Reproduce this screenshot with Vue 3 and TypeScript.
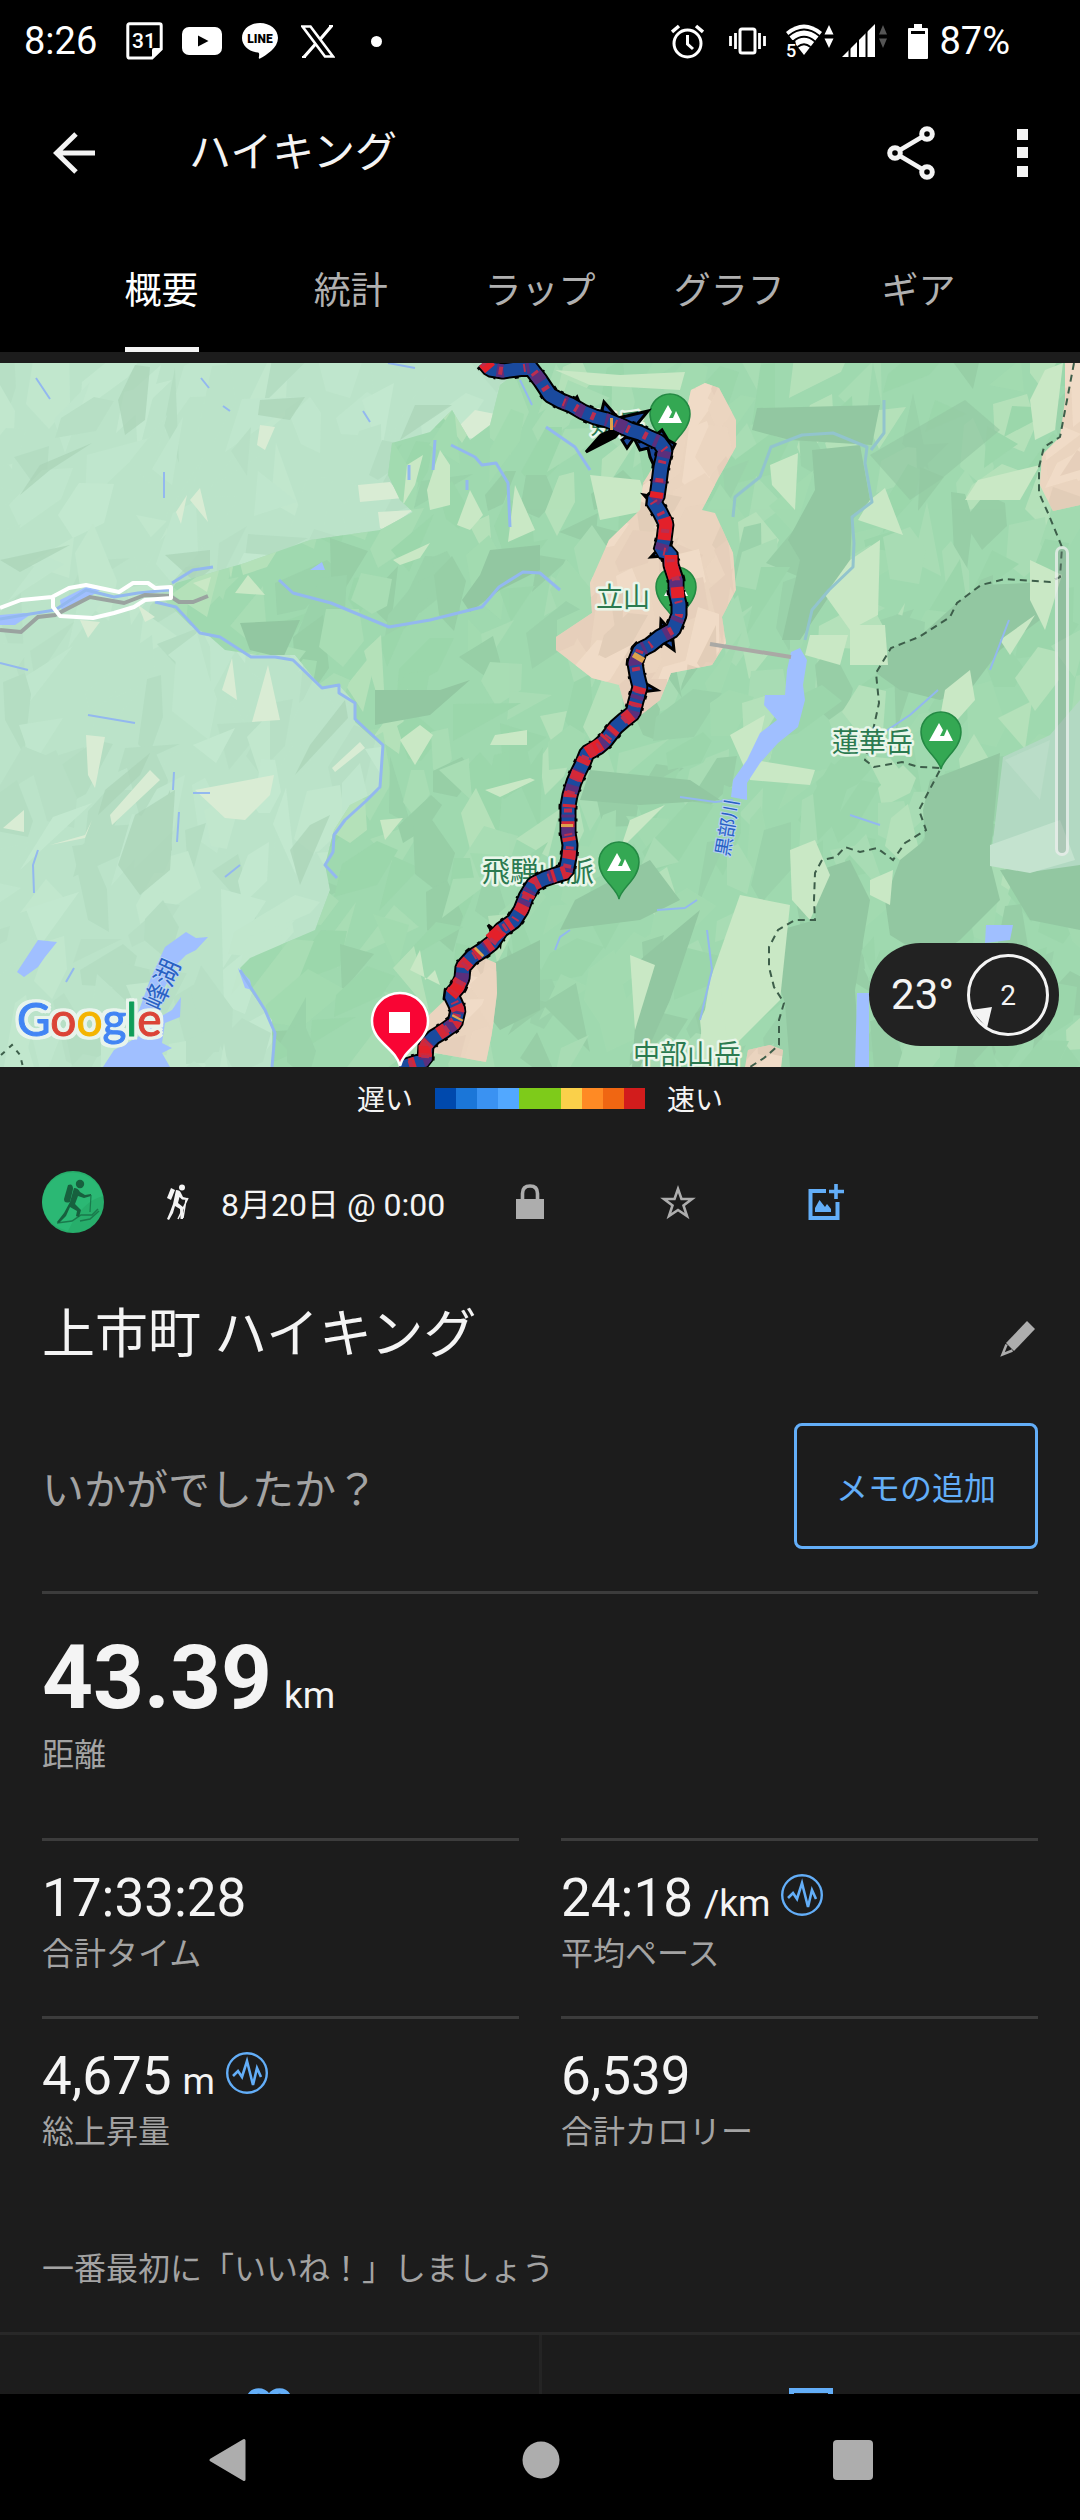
<script setup lang="ts">
import { ref } from 'vue'

const tabs = ['概要', '統計', 'ラップ', 'グラフ', 'ギア']
const activeTab = ref(0)

const paceScale = ['#0049ad', '#1b76d8', '#3a92f2', '#52a8ff', '#7ecb1a', '#7ecb1a', '#fad04a', '#ff8a24', '#f06612', '#d21c1c']

interface Stat {
  value: string
  unit?: string
  label: string
  pulse?: boolean
}

const stats: Stat[] = [
  { value: '17:33:28', label: '合計タイム' },
  { value: '24:18', unit: '/km', label: '平均ペース', pulse: true },
  { value: '4,675', unit: 'm', label: '総上昇量', pulse: true },
  { value: '6,539', label: '合計カロリー' },
]

interface Facet {
  points: string
  fill: string
}

// Shaded relief: slanted polygons scattered over the terrain, from a seeded generator.
function relief(seed: number, cell: number, palette: string[]): Facet[] {
  let state = seed
  const rnd = (): number => {
    state = (state * 1664525 + 1013904223) % 4294967296
    return state / 4294967296
  }
  const out: Facet[] = []
  for (let cy = 360; cy < 1080; cy += cell) {
    for (let cx = -10; cx < 1100; cx += cell) {
      const x = cx + rnd() * cell
      const y = cy + rnd() * cell
      const tilt = -0.5 - rnd() * 1.4
      const long = cell * (0.6 + rnd() * 0.7)
      const wide = cell * (0.3 + rnd() * 0.35)
      const corners = rnd() < 0.4 ? 3 : 5
      const pts: string[] = []
      for (let i = 0; i < corners; i++) {
        const a = ((i + rnd() * 0.6) / corners) * Math.PI * 2
        const u = Math.cos(a) * long
        const v = Math.sin(a) * wide
        pts.push(`${Math.round(x + u * Math.cos(tilt) - v * Math.sin(tilt))},${Math.round(y + u * Math.sin(tilt) + v * Math.cos(tilt))}`)
      }
      out.push({ points: pts.join(' '), fill: palette[Math.floor(rnd() * palette.length)] })
    }
  }
  return out
}

const lowland = relief(7, 42, ['#c8ecd4', '#b0dabf', '#c3e9d0', '#b5dec3', '#c5ead1', '#bce4ca'])
const park = relief(42, 38, ['#93c8a2', '#aedfb8', '#98cfa8', '#aedfb8', '#c2e6c1', '#9ad5aa', '#a5dcb2', '#9ad5aa'])
const alpine = relief(99, 34, ['#e4ceb9', '#f3dfca', '#dfcab5', '#ecd6c1'])

const track =
  'M484 362 490 369 503 371 517 369 530 367 540 380 550 395 561 401 571 405 583 412 595 417 607 420 619 425 630 430 640 433 650 438 659 442 665 450 661 467 659 483 657 497 653 501 660 512 666 524 664 540 661 551 670 553 671 565 676 580 676 592 679 604 679 615 673 630 660 637 650 645 640 650 635 663 637 675 640 687 636 701 633 713 624 720 616 727 606 740 598 747 587 753 583 763 578 773 574 782 570 795 568 806 568 820 568 833 570 845 569 857 566 872 556 875 544 879 534 884 526 897 521 910 514 921 501 930 492 943 483 950 472 957 463 967 462 978 458 987 451 995 455 1003 458 1010 455 1023 444 1031 434 1037 426 1045 425 1060 400 1068'

const boundary =
  'M1074 363 1067 400 1060 437 1044 447 1039 467 1039 493 1048 513 1062 547 1060 577 1050 582 1005 579 981 585 957 603 950 617 919 637 891 648 876 673 879 703 872 735 865 760 874 767 902 762 919 767 941 768 919 810 926 830 905 843 893 860 877 848 860 852 845 847 836 857 822 860 815 873 814 900 815 920 795 920 778 930 769 947 769 967 774 987 784 1003 779 1020 779 1045 764 1058 750 1067'

const peaks = [
  { x: 670, y: 414 },
  { x: 676, y: 587 },
  { x: 941, y: 732 },
  { x: 619, y: 862 },
]
</script>

<template>
  <div class="screen">
    <header class="top">
      <div class="status">
        <span class="clock">8:26</span>
        <svg class="ic-cal" width="37" height="38" viewBox="0 0 37 38">
          <path d="M3.500 1.800H33.500Q35.200 1.800 35.200 3.500V27L26 36H3.500Q1.800 36 1.800 34.300V3.500Q1.800 1.800 3.500 1.800Z" fill="none" stroke="#fff" stroke-width="3" />
          <path d="M35 26 26 36V28Q26 26 28 26Z" fill="#fff" />
          <text x="18" y="26" text-anchor="middle" font-size="21" font-weight="500" fill="#fff">31</text>
        </svg>
        <svg class="ic-yt" width="40" height="28" viewBox="0 0 40 28">
          <rect width="40" height="28" rx="7" fill="#fff" /><path d="M16 8.500 26.500 14 16 19.500Z" />
        </svg>
        <svg class="ic-line" width="36" height="36" viewBox="0 0 36 36">
          <path d="M18 0C8 0 0 6.500 0 15 0 23 7 28.500 16 29.600 17.500 30 17.300 32 16.800 34.500 16.700 35.800 17.500 36 18.500 35.300 24 32 36 25 36 15 36 6.500 28 0 18 0Z" fill="#fff" />
          <text x="18" y="20" text-anchor="middle" font-size="12" font-weight="900">LINE</text>
        </svg>
        <svg class="ic-x" width="34" height="33" viewBox="0 0 34 33">
          <path d="M1.500 1.500H9.500L32 31.500H24Z" fill="none" stroke="#fff" stroke-width="2.600" />
          <path d="M30.500 1 19 14.500M14.500 19 3 32" stroke="#fff" stroke-width="3.200" /><path d="M28 1h4M1 32h4" stroke="#fff" stroke-width="2" />
        </svg>
        <i class="more-dot"></i>
        <div class="status-right">
          <svg width="33" height="35" viewBox="0 0 33 35">
            <circle cx="16.500" cy="19.500" r="13.500" fill="none" stroke="#fff" stroke-width="3" />
            <path d="M16.500 11V20L22 25" fill="none" stroke="#fff" stroke-width="3" /><path d="M1 8 8 2M32 8 25 2" stroke="#fff" stroke-width="3.500" />
          </svg>
          <svg class="ic-vib" width="37" height="28" viewBox="0 0 37 28">
            <rect x="11" y="2" width="15" height="24" rx="2" fill="none" stroke="#fff" stroke-width="3" />
            <path d="M1.500 9V19M6.500 6V22M30.500 6V22M35.500 9V19" stroke="#fff" stroke-width="2.800" />
          </svg>
          <svg class="ic-wifi" width="48" height="44" viewBox="0 -5 48 44">
            <path d="M0 8Q18-7 36 8L18 31Z" fill="#fff" />
            <path d="M2.500 12Q18-1 33.500 12M7 17.500Q18 8 29 17.500M11.500 23Q18 17.500 24.500 23" fill="none" stroke="#000" stroke-width="1.800" />
            <path d="M0 16H9L13 34H0Z" />
            <text x="0" y="33" font-size="18" font-weight="500" fill="#fff">5</text>
            <path d="M43 1 47.500 10.500H38.500ZM43 24 47.500 14.500H38.500Z" fill="#fff" />
          </svg>
          <svg class="ic-sig" width="46" height="34" viewBox="0 0 46 34">
            <path d="M0 33 33 0V33Z" fill="#fff" /><path d="M7.500 0V34M16 0V34M24.500 0V34" stroke="#000" stroke-width="2" />
            <path d="M41 1 45 10.500H37ZM41 24 45 14.500H37Z" fill="#555" />
          </svg>
          <svg class="ic-bat" width="20" height="35" viewBox="0 0 20 35">
            <path d="M6 0H14V4H19Q20 4 20 5V34Q20 35 19 35H1Q0 35 0 34V5Q0 4 1 4H6Z" fill="#fff" /><path d="M3 7H17V10H3Z" />
          </svg>
          <span class="battery">87%</span>
        </div>
      </div>

      <div class="appbar">
        <button class="plain" aria-label="戻る">
          <svg width="42" height="42" viewBox="0 0 42 42"><path d="M42 21H5M23 2 3.500 21 23 40" fill="none" stroke="#f4f4f4" stroke-width="5" /></svg>
        </button>
        <h1>ハイキング</h1>
        <button class="plain" aria-label="共有">
          <svg width="48" height="54" viewBox="0 0 48 54">
            <path d="M8 27 40 8M8 27 40 46" stroke="#f4f4f4" stroke-width="4.500" />
            <g fill="#000" stroke="#f4f4f4" stroke-width="5"><circle cx="8" cy="27" r="5.300" /><circle cx="40" cy="8" r="5.300" /><circle cx="40" cy="46" r="5.300" /></g>
          </svg>
        </button>
        <button class="plain" aria-label="その他">
          <svg width="11" height="48" viewBox="0 0 11 48"><path d="M0 0H11V11H0ZM0 18H11V29H0ZM0 37H11V48H0Z" fill="#f4f4f4" /></svg>
        </button>
      </div>

      <nav class="tabs">
        <button v-for="(tab, i) in tabs" :key="tab" class="plain tab" :class="{ on: i === activeTab }" @click="activeTab = i">
          <span>{{ tab }}</span>
        </button>
      </nav>
    </header>

    <main>
      <section class="map">
        <svg class="terrain" viewBox="0 363 1080 704" preserveAspectRatio="xMidYMid slice">
          <defs>
            <clipPath id="parkArea">
              <path d="M530 363 500 385 490 425 470 440 452 410 430 432 392 443 388 475 400 500 413 512 380 530 310 540 245 563 176 583 165 600 190 625 208 635 225 650 258 655 295 655 322 688 339 685 355 703 355 722 383 747 380 790 350 805 334 830 325 865 330 890 315 930 250 958 240 968 250 990 272 1020 273 1067H1080V363Z" />
            </clipPath>
            <clipPath id="alpineArea">
              <path d="M705 383 719 388 736 420 736 447 719 477 702 510 715 513 733 553 736 590 722 617 726 643 712 665 671 673 660 700 632 722 624 703 619 685 592 678 556 650 556 637 592 613 590 583 609 540 640 510 643 483 685 417 691 390ZM1065 363H1080V505L1053 511 1040 485 1042 455 1060 437 1065 400ZM482 957 496 963 497 993 492 1033 486 1062 430 1052 427 1017 448 997ZM745 1067 748 1050 770 1045 783 1050 781 1067Z" />
            </clipPath>
          </defs>
          <rect y="363" width="1080" height="704" fill="#bbe3c9" />
          <g opacity="0.600"><polygon v-for="(f, i) in lowland" :key="i" :points="f.points" :fill="f.fill" /></g>
          <g fill="#a9d3b7">
            <path d="M135 365 150 367 145 420 125 435 118 400ZM260 400 305 397 290 420 258 415ZM165 555 210 550 210 570 195 582ZM150 753 140 775 98 815 105 790ZM175 790 170 870 140 895 118 865 135 815ZM345 700 348 718 295 775 310 745ZM310 825 330 815 300 885 290 850ZM170 790 172 850 150 880 138 860ZM40 465 92 443 50 470 20 495ZM0 560 70 545 20 572ZM415 405 452 405 400 440Z" opacity="0.700" />
          </g>
          <g fill="#d9ecd4">
            <path d="M260 425 275 427 265 450 257 445ZM200 488 208 522 190 500ZM187 495 181 524 176 512ZM358 485 390 482 403 498 360 502ZM378 512 413 510 385 530 380 528ZM232 658 237 700 222 690ZM268 665 280 720 252 722ZM86 735 105 737 95 788 88 775ZM150 770 160 780 112 825 110 815ZM85 838 92 820 85 835 50 845ZM195 790 274 775 270 795 245 820 225 818ZM360 742 365 748 335 772 332 768ZM3 828 24 810 24 832ZM475 410 500 415 507 445 452 435 460 425ZM80 620 100 622 88 638ZM138 605 155 617 145 622Z" />
          </g>

          <g clip-path="url(#parkArea)">
            <rect y="363" width="1080" height="704" fill="#9fd9af" />
            <g opacity="0.620"><polygon v-for="(f, i) in park" :key="i" :points="f.points" :fill="f.fill" /></g>
            <g fill="#92c7a1">
              <path d="M757 408 880 405 872 445 790 440 752 430Z" /><path d="M812 450 860 445 870 500 852 520 850 565 800 640 782 640 800 560 788 540 815 490Z" />
              <path d="M490 550 540 545 540 570 500 590 470 612 462 600 480 575Z" /><path d="M240 623 300 620 283 658 250 650Z" />
              <path d="M876 673 891 648 919 637 957 603 981 585 1050 582 1060 577 1040 620 1000 650 970 690 940 700 900 690Z" />
              <path d="M930 780 1000 753 990 860 1000 900 960 940 930 960 890 935 885 900 900 860 925 840 923 810Z" />
              <path d="M820 870 850 860 870 900 855 990 860 1067 790 1067 785 1003 770 960 780 930 815 920Z" />
              <path d="M590 770 690 780 720 800 640 805 580 800Z" /><path d="M575 900 650 860 680 900 640 920 560 930Z" /><path d="M640 960 700 910 670 1000 640 1067 632 1067Z" />
              <path d="M870 455 965 400 1000 430 940 480 910 500Z" opacity="0.600" /><path d="M375 690 440 690 470 680 430 715 375 725Z" />
              <path d="M1000 870 1080 860V930L1030 920Z" /><path d="M460 980 540 940 540 1010 500 1030Z" />
            </g>
            <g fill="#c9e8c5">
              <path d="M440 450 450 465 450 505 430 510 427 490Z" /><path d="M407 465 423 455 415 485 403 505Z" /><path d="M470 490 483 515 470 530 457 525Z" />
              <path d="M515 485 535 530 508 542Z" /><path d="M393 560 430 543 420 558 400 565Z" /><path d="M248 575 265 595 235 593Z" /><path d="M193 583 211 577 207 592Z" />
              <path d="M870 500 885 488 903 535 858 520Z" /><path d="M850 560 880 540 878 615 850 630 825 595Z" /><path d="M810 635 848 635 840 665 805 655Z" />
              <path d="M850 625 885 625 888 665 850 665Z" /><path d="M978 480 1040 465 1020 500 965 500Z" /><path d="M1030 560 1062 575 1045 630 1030 600Z" />
              <path d="M590 475 640 480 650 510 600 520Z" /><path d="M770 465 798 453 795 510 772 485Z" /><path d="M1045 370 1063 363 1055 430 1035 440 1030 400Z" />
              <path d="M555 370 620 375 685 372 680 390 590 385Z" /><path d="M945 690 970 670 975 700 935 745Z" /><path d="M1000 640 1035 615 1010 655Z" />
              <path d="M730 735 765 715 755 760 815 770 810 785 750 780Z" /><path d="M740 895 790 905 780 1000 730 1050 700 1040 710 980Z" />
              <path d="M790 850 815 840 830 875 810 920 792 900Z" /><path d="M630 955 655 965 635 1030Z" /><path d="M400 740 420 725 433 735 415 765Z" />
              <path d="M495 735 527 730 527 745 490 745Z" /><path d="M485 790 530 778 535 780 500 797Z" /><path d="M380 820 403 818 385 840Z" /><path d="M410 970 420 950 425 980 435 970 440 985Z" />
              <path d="M630 820 665 805 630 840 620 850Z" /><path d="M870 880 893 870 890 905 870 895Z" /><path d="M700 1020 720 980 730 1067H705Z" />
            </g>
            <path d="M1003 757 1050 735 1080 700V865L1030 872 990 865Z" fill="#b2d9c2" /><path d="M990 845 1060 820 1075 860 1030 873 990 866Z" fill="#c4e3cf" /><path d="M1005 760 1050 740 1040 800Z" fill="#bfe0cc" opacity="0.600" />
          </g>
          <g clip-path="url(#alpineArea)">
            <rect y="363" width="1080" height="704" fill="#ead4bf" />
            <g opacity="0.700"><polygon v-for="(f, i) in alpine" :key="i" :points="f.points" :fill="f.fill" /></g>
          </g>

          <g fill="#a0bfff">
            <path d="M791 652 800 648 807 660 803 685 805 700 798 727 778 743 760 763 747 783 747 800 731 797 733 780 747 760 760 733 777 720 764 705 765 695 785 695 787 670Z" />
            <path d="M38 940 57 942 45 957 38 967 24 977 17 972Z" />
            <path d="M165 947 186 932 196 938 208 937 196 950 186 955 176 965 165 987 152 1010 138 1013 150 980Z" />
            <path d="M103 1067 114 1050 138 1037 155 1020 172 1010 181 997 180 1017 165 1023 162 1043 172 1048 162 1053 170 1067Z" />
            <path d="M857 993H869V1067H855ZM986 925H1013L1010 940 985 943ZM238 968 250 980 252 990 245 988ZM0 615 24 613 30 615 15 625 0 625ZM310 570 322 562 325 570Z" />
            <path d="M60 600 86 587 100 590 85 600 62 612Z" />
          </g>
          <g fill="none" stroke="#93b8ef" stroke-width="3" stroke-linejoin="round">
            <path d="M0 619 24 615 55 610 86 590 114 597 138 593 169 590M172 583 193 570 213 567" />
            <path d="M155 602 176 607 200 633 220 637 251 657 275 657 293 660 322 688 339 685 339 693 355 703 355 719 383 745 380 787 366 801 345 820 334 835 333 852 325 865 337 878" />
            <path d="M279 580 293 593 331 603 389 627 430 620 458 613 482 607 499 587 523 572 540 573 560 590" />
            <path d="M733 517 735 497 760 477 771 447 802 435 833 433 867 447 865 463 872 502 852 517 854 543 853 567 829 590 812 610 805 640M884 400 884 433 871 450" stroke="#92c4cd" />
            <path d="M546 427 575 447 590 470M451 445 475 457 482 465 496 463 508 483 510 527M435 440 433 470M409 465V480M467 480V490M240 970 248 983 265 1010 275 1033 272 1067" />
            <path d="M201 378 209 388M223 406 230 411M363 411 370 422M36 378 50 399M164 472V498M0 663 28 670M88 715 135 723M174 772 173 790M179 812 177 842M193 793H210M38 850 33 865 34 893M225 877 240 865M66 982 74 968M388 363 415 368M520 380 532 405M1009 620 990 670M938 690 910 715 880 735M680 797 715 802 733 800M850 815 880 825M657 910 685 908 697 900M555 950 560 937 570 930M707 930 712 970 700 1020" stroke-width="2" />
          </g>
          <path d="M0 630 21 632 38 617 55 615 90 597 124 603 145 595 170 596 179 602 193 602 208 596" fill="none" stroke="#9aa3a0" stroke-width="4" />
          <path d="M0 608 21 600 52 597 69 588 86 585 119 592 133 583 148 583 155 588 171 587V598L145 600 134 607 114 613 93 618 60 616 53 607V597" fill="none" stroke="#fff" stroke-width="4" stroke-linejoin="round" />
          <path d="M710 644 791 657" stroke="#aaa9a5" stroke-width="4" />
          <path :d="boundary" fill="none" stroke="#3d5e4a" stroke-width="2" stroke-dasharray="7 5" />
          <path d="M1 1055 12 1045 20 1055 23 1067" fill="none" stroke="#3d5e4a" stroke-width="2" stroke-dasharray="5 6" />

          <g class="peak-name">
            <text x="590" y="434">剱岳</text>
            <text x="596" y="607">立山</text>
            <text x="832" y="752">蓮華岳</text>
            <text x="482" y="882" font-size="28">飛騨山脈</text>
            <text x="633" y="1064">中部山岳</text>
          </g>
          <text class="water" transform="translate(729 857) rotate(-80)" font-size="19">黒部川</text>
          <text class="water" transform="translate(160 1012) rotate(-66)" font-size="26">峰湖</text>

          <g v-for="p in peaks" :key="p.x" :transform="`translate(${p.x} ${p.y})`">
            <path d="M0 37C-2 26-20 17-20 0A20 20 0 0 1 20 0C20 17 2 26 0 37Z" fill="#34a853" stroke="#238943" stroke-width="1.500" />
            <path d="M-12 9-2-9 2-2-1 4H3L6-3 12 9Z" fill="#fff" />
          </g>

          <g fill="#1a4a9e" stroke="#000" stroke-width="3" stroke-linejoin="miter">
            <path d="M586 452 601 435 625 425 615 437Z" fill="#000" />
            <path d="M604 402 618 418 648 411 634 428 600 418Z" />
            <path d="M622 440 627 448 634 438 640 450 648 448 650 457 656 470 660 480 668 468 672 450 675 444 668 440 662 430 655 436 640 426Z" />
            <path d="M577 397 584 413 570 405Z" />
            <path d="M644 495 660 498 662 515ZM651 557 662 545 666 556ZM661 620 672 632 674 650 660 640ZM645 683 657 690 641 692ZM488 925 501 935 500 945Z" />
          </g>
          <g fill="none" stroke-linejoin="bevel">
            <path :d="track" stroke="#000" stroke-width="17" />
            <path :d="track" stroke="#000" stroke-width="19" stroke-dasharray="3 11 2 17 4 9" />
            <path :d="track" stroke="#1a4a9e" stroke-width="13" />
            <path :d="track" stroke="#5b2f7c" stroke-width="13" stroke-dasharray="4 12 7 23 3 9 10 31" />
            <path d="M484 362 490 369M657 492 656 498M664 518 666 524 664 540M671 555 671 565 675 578M677 587 678 598M601 744 587 753M585 758 583 763M501 930 490 940M451 995 458 987 460 981M425 1045V1057" stroke="#e3202a" stroke-width="13" />
            <path d="M640 687 636 701 633 713 616 727 598 747 587 753 578 773 570 795 568 820 568 833 570 845 569 857 566 872 544 879 534 884 521 910 514 921 501 930 492 943 472 957 463 967 462 978 451 995 458 1010 455 1023 434 1037 426 1045 425 1060 400 1068" stroke="#d42838" stroke-width="13" stroke-dasharray="6 10 4 9 9 13 5 7 3 14" />
            <path :d="track" stroke="#bb2e50" stroke-width="8" stroke-dasharray="3 15 4 21 2 11" />
            <path d="M610 424 613 424M640 655 637 660M567 824 567 827M480 951 478 953M458 1017 457 1019" stroke="#dda24d" stroke-width="12" />
          </g>

          <path d="M400 1066C396 1048 372 1042 372 1021A28 28 0 0 1 428 1021C428 1042 404 1048 400 1066Z" fill="#f90534" stroke="#fff" stroke-width="2.500" />
          <rect x="389" y="1012" width="21" height="21" fill="#fff" />

          <text class="logo" x="17" y="1036"><tspan class="g1">G</tspan><tspan class="g2">o</tspan><tspan class="g3">o</tspan><tspan class="g1">g</tspan><tspan class="g4">l</tspan><tspan class="g2">e</tspan></text>
        </svg>
        <i class="scrollbar"></i>
        <div class="weather">
          <span>23°</span>
          <svg width="82" height="82" viewBox="0 0 82 82">
            <circle cx="41" cy="41" r="39.500" fill="none" stroke="#f4f4f4" stroke-width="3" /><path d="M4 56 25 53 20 74Z" fill="#f4f4f4" />
            <text x="41" y="51" text-anchor="middle" font-size="28" fill="#f4f4f4">2</text>
          </svg>
        </div>
      </section>

      <div class="legend">
        <span>遅い</span>
        <div class="scale"><i v-for="(c, i) in paceScale" :key="i" :style="{ background: c }"></i></div>
        <span>速い</span>
      </div>

      <div class="meta">
        <svg class="avatar" width="62" height="62" viewBox="0 0 62 62">
          <circle cx="31" cy="31" r="31" fill="#27ae6b" /><path d="M0 31A31 31 0 0 1 61 25Q40 30 26 60 2 54 0 31Z" fill="#2dbc78" opacity="0.700" />
          <path d="M15 52 30 50 39 44 50 44 56 38M38 50 48 48 57 40" fill="none" stroke="#1a7a4c" stroke-width="1.500" />
          <g fill="#17603e"><circle cx="38" cy="13" r="4.200" /><path d="M26 14Q31 12 31 18L28 31Q22 33 22 28Z" /><path d="M32 17Q36 17 38 21L43 24 49 23V25L42 27 36 25 33 33 39 39 37 46 34 45 35 40 28 36 24 45 17 52 15 51 22 42 28 31Z" /></g>
          <path d="M49 24 48 41" stroke="#1a7a4c" stroke-width="1.200" />
        </svg>
        <svg class="hiker" width="24" height="36" viewBox="0 0 24 36">
          <g fill="#f4f4f4"><circle cx="16" cy="3.500" r="3" /><path d="M5 4 9 6 5 16 1 14Z" /><path d="M10 6Q14 6 15 9L17 13 21 14V16L16 15.500 13.500 13 12 19 17 23 17 35H14.500L14 25 9 22 7 29 3 36 1 35 4 28 7 20Z" /></g>
          <path d="M22 14 12 35M20 16 17 34" stroke="#f4f4f4" stroke-width="1.500" />
        </svg>
        <time>8月20日 @ 0:00</time>
        <div class="actions">
          <button class="plain" aria-label="非公開">
            <svg width="36" height="36" viewBox="0 0 36 36"><path d="M10.500 16V9.500Q10.500 2 18 2T25.500 9.500V16" fill="none" stroke="#adadad" stroke-width="3.600" /><path d="M4 15H32V35H4Z" fill="#adadad" /></svg>
          </button>
          <button class="plain" aria-label="お気に入り">
            <svg width="36" height="36" viewBox="0 0 36 36"><path d="M18 5 21.500 15H32L23.500 21.500 27 32 18 26 9 32 12.500 21.500 4 15H14.500Z" fill="none" stroke="#adadad" stroke-width="2.600" /></svg>
          </button>
          <button class="plain" aria-label="写真を追加">
            <svg width="36" height="36" viewBox="0 0 36 36"><path d="M18 7H2.500V34H29.500V18" fill="none" stroke="#63aef8" stroke-width="4" /><path d="M28 0V15M21 7.500H36" stroke="#63aef8" stroke-width="3.600" /><path d="M7 28V24L11.500 16 17 23 19 20 23 25V28Z" fill="#63aef8" /></svg>
          </button>
        </div>
      </div>

      <div class="title-row">
        <h2>上市町 ハイキング</h2>
        <button class="plain" aria-label="編集">
          <svg width="36" height="36" viewBox="0 0 36 36"><path d="M27 0 35 8 14 30 6 22Z" fill="#adadad" /><path d="M6.500 23.500 2.500 33.500 12.500 29.500" fill="none" stroke="#adadad" stroke-width="2.500" /></svg>
        </button>
      </div>

      <div class="memo-row">
        <p>いかがでしたか？</p>
        <button class="memo">メモの追加</button>
      </div>

      <dl class="distance">
        <dt>距離</dt>
        <dd><b>43.39</b> <small>km</small></dd>
      </dl>

      <dl class="grid">
        <div v-for="s in stats" :key="s.label" class="stat">
          <dt>{{ s.label }}</dt>
          <dd>
            {{ s.value }} <small v-if="s.unit">{{ s.unit }}</small>
            <svg v-if="s.pulse" width="42" height="42" viewBox="0 0 42 42">
              <circle cx="21" cy="21" r="19.800" fill="none" stroke="#63aef8" stroke-width="2.400" />
              <path d="M7 24 12 19 16 25 21 9 27 33 31 16 35 25" fill="none" stroke="#63aef8" stroke-width="2.600" />
            </svg>
          </dd>
        </div>
      </dl>

      <p class="likes">一番最初に「いいね！」しましょう</p>

      <div class="social">
        <button class="plain" aria-label="いいね">
          <svg width="44" height="40" viewBox="0 0 44 40"><path d="M22 37 6 22C-3 12 4 3 11.500 3 17 3 20 6 22 10 24 6 27 3 32.500 3 40 3 47 12 38 22Z" fill="none" stroke="#63aef8" stroke-width="5.500" /></svg>
        </button>
        <button class="plain" aria-label="コメント">
          <svg width="44" height="40" viewBox="0 0 44 40"><path d="M2.500 2.500H41.500V30H20L10 38V30H2.500Z" fill="none" stroke="#63aef8" stroke-width="5" /></svg>
        </button>
      </div>
    </main>

    <footer class="sysnav">
      <button class="plain" aria-label="戻る"><svg width="42" height="44" viewBox="0 0 42 44"><path d="M5 22 38 2.500V41.500Z" fill="#adadad" stroke="#adadad" stroke-width="3" stroke-linejoin="round" /></svg></button>
      <button class="plain" aria-label="ホーム"><svg width="42" height="44" viewBox="0 0 42 44"><circle cx="22" cy="22" r="18.500" fill="#adadad" /></svg></button>
      <button class="plain" aria-label="履歴"><svg width="42" height="44" viewBox="0 0 42 44"><rect x="1" y="2" width="40" height="40" rx="4" fill="#adadad" /></svg></button>
    </footer>
  </div>
</template>

<style>
body {
  margin: 0;
  background: #1c1c1c;
}
</style>

<style scoped>
* {
  box-sizing: border-box;
}
h1, h2, p, dl, dd {
  margin: 0;
  font-weight: 400;
}
svg {
  display: block;
  flex-shrink: 0;
}
.screen {
  display: flex;
  flex-direction: column;
  height: 100vh;
  overflow: hidden;
  background: #1c1c1c;
  color: #f4f4f4;
  font-family: Roboto, 'Noto Sans CJK JP', sans-serif;
}
.plain {
  display: flex;
  align-items: center;
  justify-content: center;
  padding: 0;
  border: 0;
  background: none;
  color: inherit;
  font: inherit;
}
.top {
  flex-shrink: 0;
  background: #000;
}
.status {
  display: flex;
  align-items: center;
  height: 82px;
  padding: 0 70px 0 24px;
  color: #fff;
  font-size: 38px;
  line-height: 44px;
}
.clock {
  margin-right: 29px;
}
.ic-cal {
  margin-right: 19px;
}
.ic-yt {
  margin-right: 20px;
}
.ic-line {
  margin-right: 23px;
}
.ic-x {
  margin-right: 36px;
}
.more-dot {
  width: 11px;
  height: 11px;
  border-radius: 50%;
  background: #fff;
}
.status-right {
  display: flex;
  align-items: center;
  margin-left: auto;
}
.ic-vib {
  margin-left: 25px;
}
.ic-wifi {
  margin-left: 20px;
}
.ic-sig {
  margin-left: 8px;
}
.ic-bat {
  margin: 0 11px 0 20px;
}
.appbar {
  display: flex;
  align-items: center;
  height: 142px;
  padding: 0 52px 0 53px;
}
.appbar h1 {
  flex: 1;
  margin-left: 94px;
  font-size: 42px;
  line-height: 60px;
}
.appbar h1 + button {
  margin-right: 82px;
}
.tabs {
  display: flex;
  height: 128px;
  padding: 0 67px;
}
.tab {
  flex: 1;
  color: #b0b0b0;
  font-size: 37px;
}
.tab span {
  display: flex;
  align-items: center;
  height: 100%;
  border: solid transparent;
  border-width: 5px 0;
}
.tab.on {
  color: #fff;
}
.tab.on span {
  border-bottom-color: #f4f4f4;
}
main {
  display: flex;
  flex: 1;
  flex-direction: column;
  min-height: 0;
  padding-top: 11px;
  overflow: hidden;
}
main > * {
  flex-shrink: 0;
}
.map {
  position: relative;
  aspect-ratio: 1080 / 704;
}
.terrain {
  width: 100%;
  height: 100%;
}
.peak-name {
  fill: #2b7a50;
  stroke: #e9f6ea;
  stroke-width: 5px;
  stroke-linejoin: round;
  paint-order: stroke;
  font-size: 27px;
}
.water {
  fill: #2a62c4;
  stroke: #b9d2f6;
  stroke-width: 2px;
  paint-order: stroke;
}
.logo {
  font-family: Lato, sans-serif;
  font-size: 46px;
  stroke-linejoin: round;
  filter: drop-shadow(3px 0 0 #e8f4ec) drop-shadow(-3px 0 0 #e8f4ec) drop-shadow(0 3px 0 #e8f4ec) drop-shadow(0 -3px 0 #e8f4ec);
}
.g1 {
  fill: #4285f4;
  stroke: #4285f4;
}
.g2 {
  fill: #db4437;
  stroke: #db4437;
}
.g3 {
  fill: #f4b400;
  stroke: #f4b400;
}
.g4 {
  fill: #0f9d58;
  stroke: #0f9d58;
}
.scrollbar {
  position: absolute;
  top: 26%;
  right: 11px;
  width: 14px;
  height: 44%;
  border: 3px solid rgba(255, 255, 255, 0.65);
  border-radius: 7px;
  background: rgba(120, 140, 128, 0.3);
}
.weather {
  position: absolute;
  right: 21px;
  bottom: 21px;
  display: flex;
  align-items: center;
  gap: 13px;
  height: 103px;
  padding: 0 10px 0 22px;
  border-radius: 52px;
  background: #222;
  font-size: 42px;
}
.legend {
  display: flex;
  align-items: center;
  justify-content: center;
  gap: 22px;
  height: 62px;
  font-size: 28px;
}
.scale {
  display: flex;
}
.scale i {
  width: 21px;
  height: 21px;
}
.meta {
  display: flex;
  align-items: center;
  margin-top: 42px;
  padding: 0 42px;
}
.hiker {
  margin: 0 31px 0 62px;
}
.meta time {
  font-size: 32px;
}
.actions {
  display: flex;
  gap: 112px;
  margin-left: 67px;
}
.title-row {
  display: flex;
  align-items: flex-end;
  justify-content: space-between;
  margin-top: 70px;
  padding: 0 44px 0 42px;
}
.title-row h2 {
  font-size: 53px;
  line-height: 64px;
}
.title-row button {
  padding-bottom: 10px;
}
.memo-row {
  display: flex;
  align-items: center;
  justify-content: space-between;
  margin: 56px 42px 0;
  padding-bottom: 42px;
  border-bottom: 3px solid #3c3c3c;
  color: #a3a3a3;
  font-size: 42px;
}
.memo {
  height: 126px;
  padding: 0 39px;
  border: 3px solid #63aef8;
  border-radius: 8px;
  background: none;
  color: #63aef8;
  font: inherit;
  font-size: 32px;
}
dl dt, .likes {
  color: #a3a3a3;
  font-size: 32px;
  line-height: 38px;
}
.distance {
  display: flex;
  flex-direction: column-reverse;
  margin: 32px 42px 64px;
}
.distance dt {
  margin-top: 6px;
}
.distance dd {
  display: flex;
  align-items: baseline;
  gap: 12px;
  height: 104px;
  line-height: 104px;
}
.distance b {
  font-size: 89px;
  font-weight: 700;
}
small {
  font-size: 37px;
}
.grid {
  display: grid;
  grid-template-columns: 1fr 1fr;
  column-gap: 42px;
  margin: 0 42px;
}
.stat {
  display: flex;
  flex-direction: column-reverse;
  padding: 26px 0 43px;
  border-top: 3px solid #3c3c3c;
}
.stat dt {
  margin-top: 6px;
}
.stat dd {
  display: flex;
  align-items: baseline;
  gap: 11px;
  height: 62px;
  font-size: 53px;
  line-height: 62px;
}
.likes {
  margin: 56px 42px 44px;
}
.social {
  display: flex;
  border-top: 3px solid #282828;
}
.social button {
  flex: 1;
  padding: 53px 0 48px;
}
.social button + button {
  border-left: 3px solid #242424;
}
.sysnav {
  display: flex;
  flex-shrink: 0;
  align-items: center;
  justify-content: space-between;
  height: 126px;
  padding: 6px 206px 0;
  background: #000;
}
</style>
